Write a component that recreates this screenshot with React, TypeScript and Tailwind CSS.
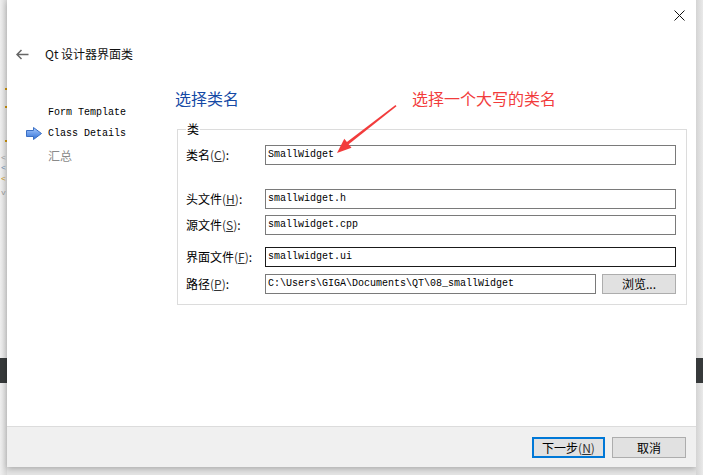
import React from "react";

const cjk = { fontFamily: '"Noto Sans CJK SC", "Noto Sans", sans-serif' };
const mono = { fontFamily: '"Liberation Mono", "Noto Sans CJK SC", monospace' };

function Key({ k }: { k: string }) {
  return (
    <span className="text-[#333]">
      (<span className="underline">{k}</span>)
    </span>
  );
}

function Field({
  label,
  k,
  value,
  dark,
  narrow,
  className,
}: {
  label: string;
  k: string;
  value: string;
  dark?: boolean;
  narrow?: boolean;
  className?: string;
}) {
  return (
    <div className={"flex items-center h-[20px] " + (className ?? "")}>
      <div className="w-[79px] text-[12px] leading-[16px] text-black whitespace-nowrap" style={cjk}>
        {label}
        <Key k={k} />:
      </div>
      <div
        className={
          "h-[20px] flex items-center pl-[2px] bg-white border " +
          (dark ? "border-[#1a1a1a] " : "border-[#7a7a7a] ") +
          (narrow ? "w-[331px]" : "w-[411px]")
        }
      >
        <span className="text-[10px] leading-none text-black whitespace-nowrap" style={mono}>
          {value}
        </span>
      </div>
      {narrow && (
        <button
          className="ml-[6px] w-[74px] h-[20px] bg-[#e1e1e1] border border-[#adadad] text-[12px] leading-none text-black"
          style={cjk}
        >
          浏览...
        </button>
      )}
    </div>
  );
}

function Strip({ side }: { side: "l" | "r" }) {
  return (
    <div
      className={
        "w-[7px] h-[475px] flex flex-col overflow-hidden " +
        (side === "l"
          ? "bg-gradient-to-r from-[#efefef] to-[#d9d9d9]"
          : "bg-gradient-to-r from-[#d4d4d4] to-[#e9e9e9]")
      }
    >
      <div className="h-[358px] flex flex-col pl-[1px] text-[8px] leading-[8px] overflow-hidden" style={mono}>
        {side === "l" && (
          <>
            <div className="mt-[88px] ml-[4px] w-[2px] h-[2px] bg-[#c8900a]" />
            <div className="mt-[16px] ml-[4px] w-[2px] h-[2px] bg-[#c8900a]" />
            <div className="mt-[32px] ml-[4px] w-[2px] h-[2px] bg-[#c8900a]" />
            <span className="mt-[12px] text-[#999]">&lt;</span>
            <span className="mt-[2px] text-[#6a8ab0]">&lt;</span>
            <span className="mt-[3px] text-[#c8900a]">&lt;</span>
            <span className="mt-[6px] text-[#999]">v</span>
          </>
        )}
      </div>
      <div className="h-[25px] bg-[#36393a]" />
    </div>
  );
}

export default function App() {
  return (
    <div className="relative w-[703px] h-[475px] bg-[#e4e4e4] flex items-start overflow-hidden">
      <Strip side="l" />

      <div className="w-[689px] h-[467px] bg-white flex flex-col shadow-[0_2px_6px_rgba(0,0,0,0.25)]">
        {/* close */}
        <div className="h-[30px] flex items-center justify-end pr-[11px]">
          <svg width="11" height="11" viewBox="0 0 11 11">
            <path d="M0.5 0.5 L10.5 10.5 M10.5 0.5 L0.5 10.5" stroke="#111" strokeWidth="1" />
          </svg>
        </div>

        {/* title */}
        <div className="mt-[14px] h-[20px] flex items-center pl-[9px]">
          <svg width="13" height="11" viewBox="0 0 13 11">
            <path d="M12.5 5.5 H1 M5.5 1 L1 5.5 L5.5 10" stroke="#666" strokeWidth="1.5" fill="none" />
          </svg>
          <span className="ml-[16px] text-[12px] leading-[16px] text-[#111]" style={cjk}>
            Qt 设计器界面类
          </span>
        </div>

        {/* main */}
        <div className="flex-1 flex">
          <div className="w-[168px] flex flex-col pt-[40px]">
            <div className="pl-[41px] h-[16px] flex items-center text-[10px] text-black" style={mono}>
              Form Template
            </div>
            <div className="mt-[5px] pl-[19px] h-[16px] flex items-center">
              <svg width="16" height="13" viewBox="0 0 16 13">
                <defs>
                  <linearGradient id="ag" x1="0" y1="0" x2="0" y2="1">
                    <stop offset="0" stopColor="#a9cbff" />
                    <stop offset="1" stopColor="#2f6fd6" />
                  </linearGradient>
                </defs>
                <path
                  d="M0.5 3.5 H7.5 V0.5 L15.5 6.5 L7.5 12.5 V9.5 H0.5 Z"
                  fill="url(#ag)"
                  stroke="#3a6fc4"
                  strokeWidth="1"
                  strokeLinejoin="round"
                />
              </svg>
              <span className="ml-[6px] text-[10px] text-black" style={mono}>
                Class Details
              </span>
            </div>
            <div className="mt-[7px] pl-[41px] h-[16px] flex items-center text-[12px] text-[#8a8a8a]" style={cjk}>
              汇总
            </div>
          </div>

          <div className="flex-1 flex flex-col">
            <div className="mt-[24px] h-[20px] flex items-center">
              <span className="text-[16px] leading-[20px] text-[#1549a5]" style={cjk}>
                选择类名
              </span>
              <span className="ml-[173px] text-[16px] leading-[20px] text-[#f23c3c]" style={cjk}>
                选择一个大写的类名
              </span>
            </div>

            <div className="relative mt-[21px] ml-[2px] w-[510px] border border-[#dcdcdc] pt-[15px] pb-[10px] pl-[8px]">
              <span
                className="absolute left-[8px] -top-[9px] bg-white px-[1px] text-[12px] leading-[16px] text-black"
                style={cjk}
              >
                类
              </span>
              <Field label="类名" k="C" value="SmallWidget" />
              <Field label="头文件" k="H" value="smallwidget.h" className="mt-[24px]" />
              <Field label="源文件" k="S" value="smallwidget.cpp" className="mt-[6px]" />
              <Field label="界面文件" k="F" value="smallwidget.ui" dark className="mt-[12px]" />
              <Field
                label="路径"
                k="P"
                value="C:\Users\GIGA\Documents\QT\08_smallWidget"
                narrow
                className="mt-[7px]"
              />
            </div>
          </div>
        </div>

        {/* footer */}
        <div className="h-[41px] bg-[#f0f0f0] border-t border-[#dcdcdc] flex justify-end items-start pt-[10px] pr-[10px] gap-[7px]">
          <button
            className="w-[73px] h-[21px] bg-[#e1e1e1] border-2 border-[#0078d7] text-[12px] leading-none text-black"
            style={cjk}
          >
            下一步<Key k="N" />
          </button>
          <button
            className="w-[74px] h-[21px] bg-[#e1e1e1] border border-[#adadad] text-[12px] leading-none text-black"
            style={cjk}
          >
            取消
          </button>
        </div>
      </div>

      <Strip side="r" />

      {/* annotation arrow */}
      <svg className="absolute left-0 top-0 pointer-events-none" width="703" height="475" viewBox="0 0 703 475">
        <path d="M395.5 105 L396.5 106.3 L348.4 144.6 L346.6 142.2 Z" fill="#f23c3c" />
        <path d="M337 153 L344.3 138.8 L351.5 147.8 Z" fill="#f23c3c" />
      </svg>
    </div>
  );
}
